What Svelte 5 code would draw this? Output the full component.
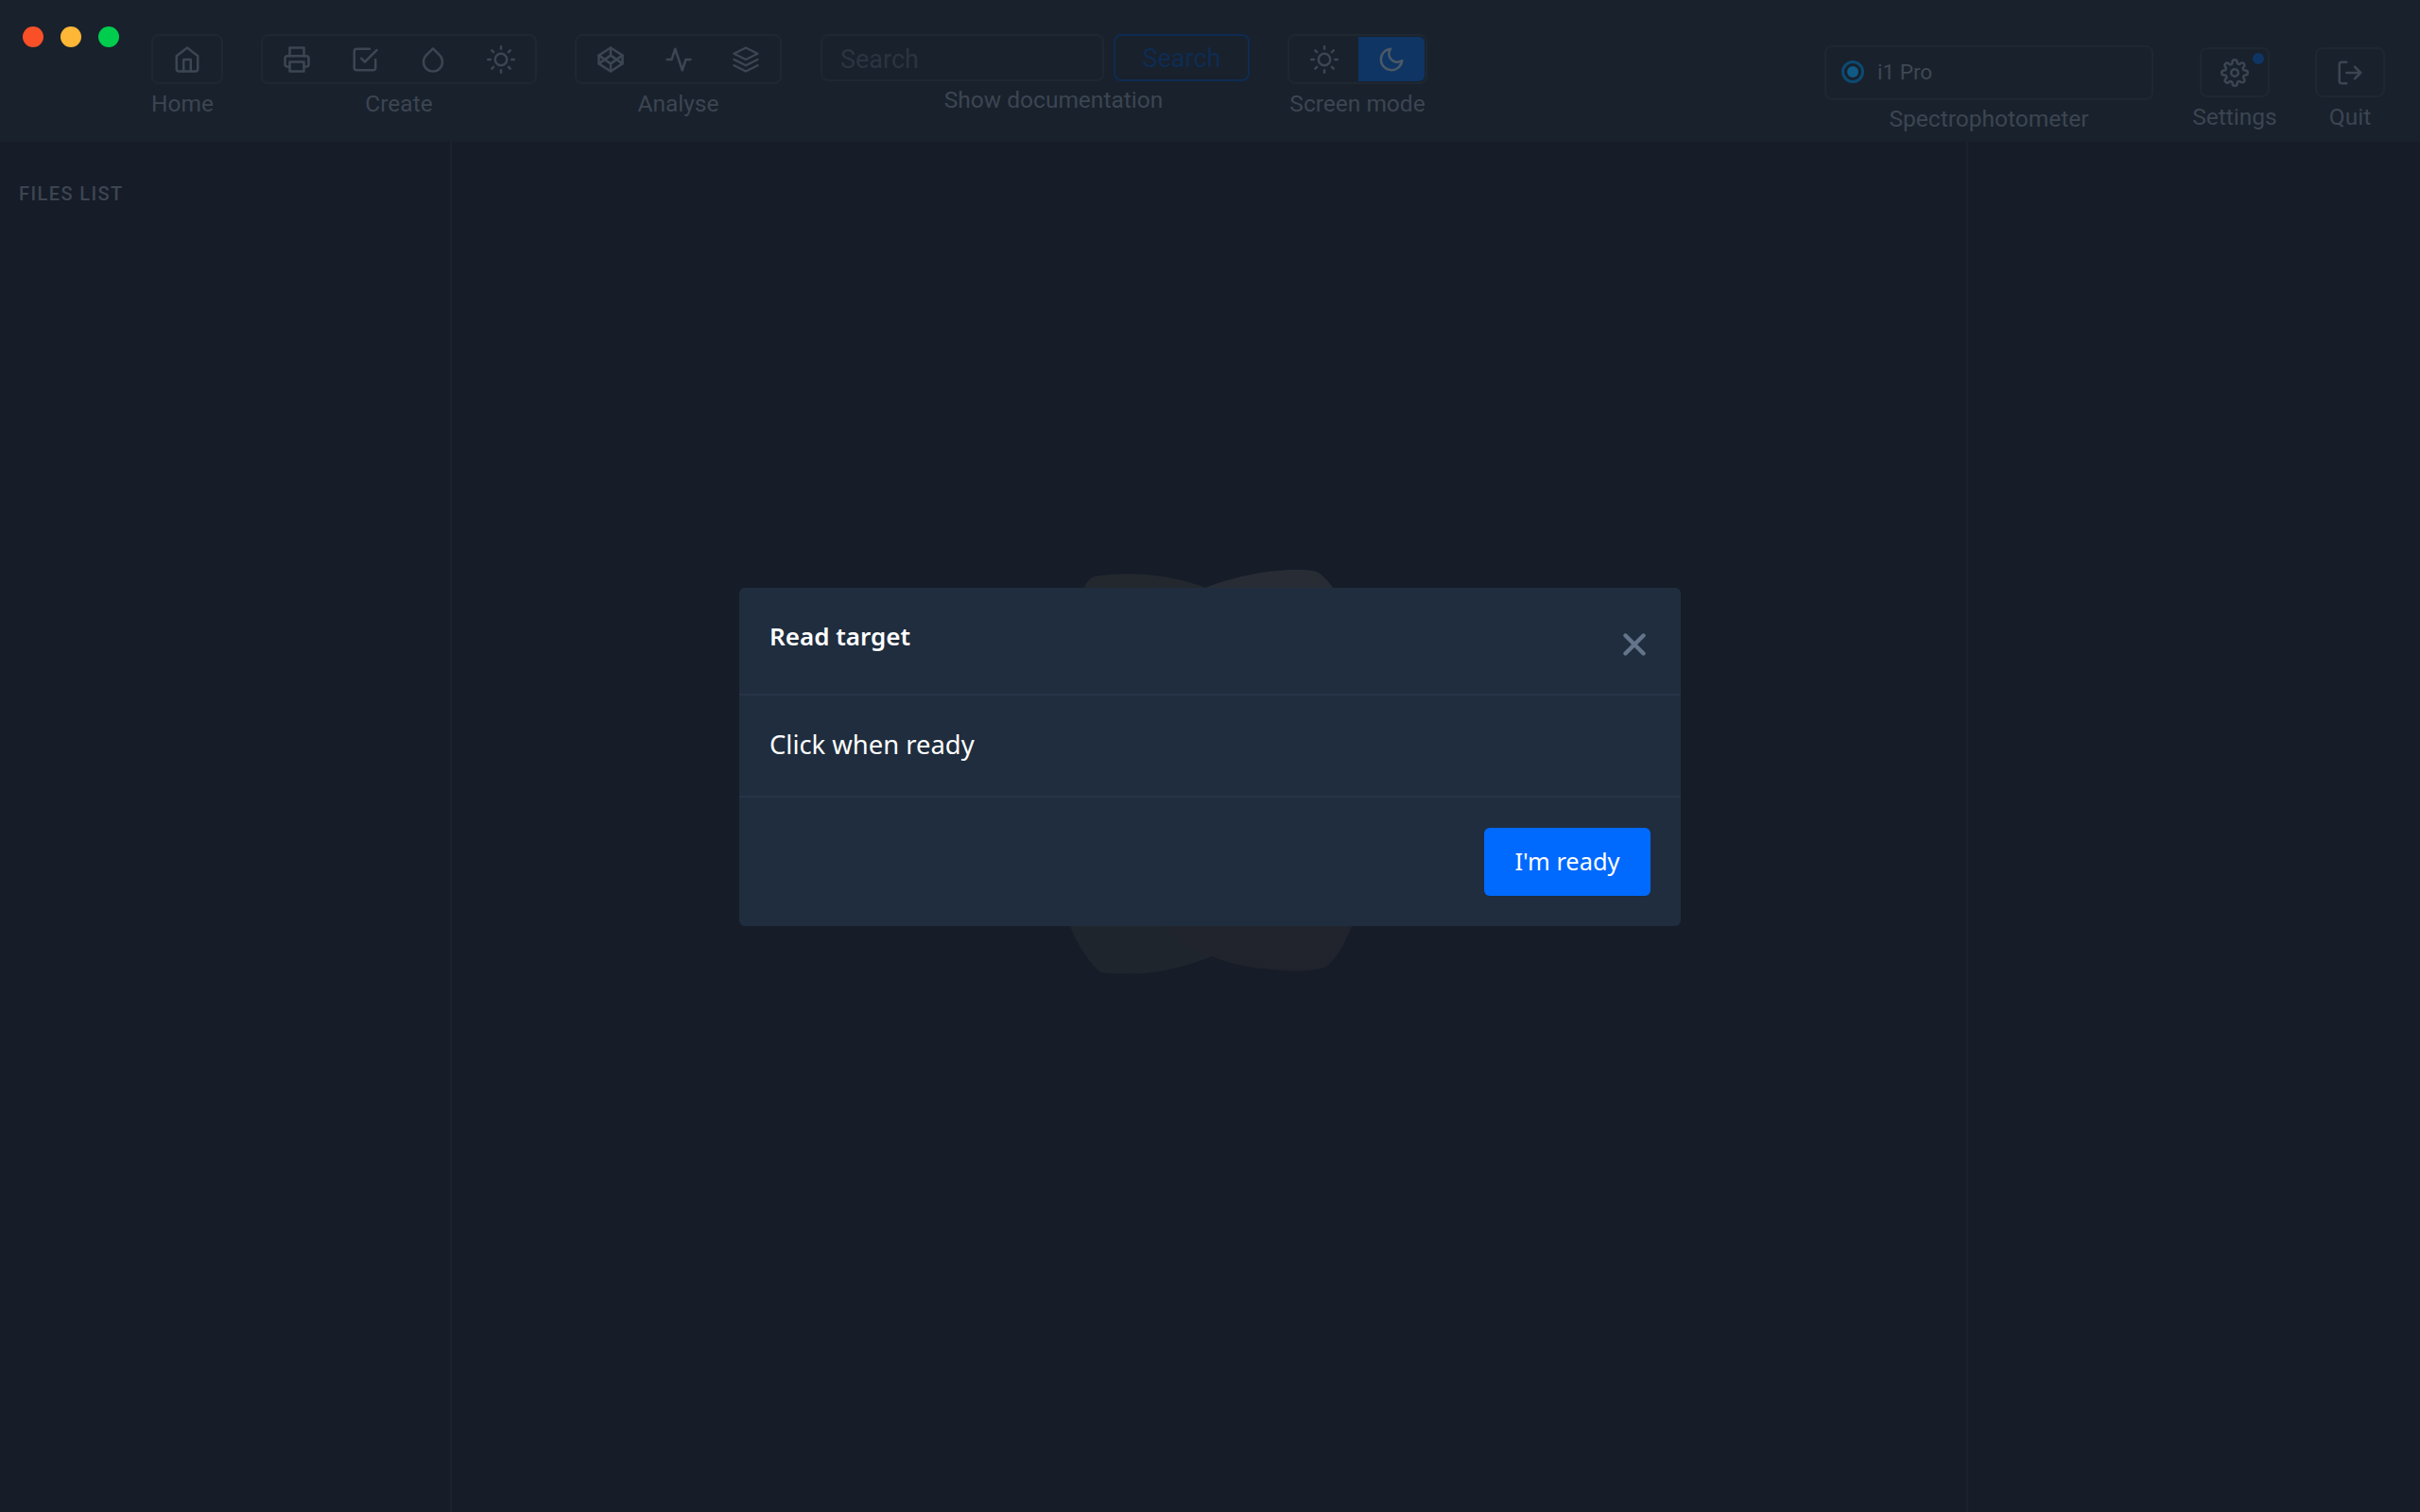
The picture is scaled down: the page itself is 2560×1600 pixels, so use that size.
<script>
  const createIcons = ['printer', 'check', 'droplet', 'sun'];
  const analyseIcons = ['codepen', 'activity', 'layers'];
</script>

{#snippet icon(name)}
  <svg class="icon" viewBox="0 0 24 24" fill="none" stroke="currentColor" stroke-width="2" stroke-linecap="round" stroke-linejoin="round">
    {#if name === 'home'}
      <path d="M3 9l9-7 9 7v11a2 2 0 0 1-2 2H5a2 2 0 0 1-2-2z" /><path d="M9 22V12h6v10" />
    {:else if name === 'printer'}
      <path d="M6 9V2h12v7" /><path d="M6 18H4a2 2 0 0 1-2-2v-5a2 2 0 0 1 2-2h16a2 2 0 0 1 2 2v5a2 2 0 0 1-2 2h-2" /><path d="M6 14h12v8H6z" />
    {:else if name === 'check'}
      <path d="M9 11l3 3L22 4" /><path d="M21 12v7a2 2 0 0 1-2 2H5a2 2 0 0 1-2-2V5a2 2 0 0 1 2-2h11" />
    {:else if name === 'droplet'}
      <path d="M12 2.69l5.66 5.66a8 8 0 1 1-11.31 0z" />
    {:else if name === 'sun'}
      <circle cx="12" cy="12" r="5" /><path d="M12 1v2M12 21v2M4.22 4.22l1.42 1.42M18.36 18.36l1.42 1.42M1 12h2M21 12h2M4.22 19.78l1.42-1.42M18.36 5.64l1.42-1.42" />
    {:else if name === 'codepen'}
      <path d="M12 2l10 6.5v7L12 22 2 15.5v-7z" /><path d="M12 22v-6.5M22 8.5l-10 7-10-7M2 15.5l10-7 10 7M12 2v6.5" />
    {:else if name === 'activity'}
      <path d="M22 12h-4l-3 9L9 3l-3 9H2" />
    {:else if name === 'layers'}
      <path d="M12 2L2 7l10 5 10-5z" /><path d="M2 17l10 5 10-5M2 12l10 5 10-5" />
    {:else if name === 'moon'}
      <path d="M21 12.79A9 9 0 1 1 11.21 3 7 7 0 0 0 21 12.79z" />
    {:else if name === 'settings'}
      <circle cx="12" cy="12" r="3" /><path d="M19.4 15a1.65 1.65 0 0 0 .33 1.82l.06.06a2 2 0 1 1-2.83 2.83l-.06-.06a1.65 1.65 0 0 0-2.82 1.17V21a2 2 0 1 1-4 0v-.09a1.65 1.65 0 0 0-2.82-1.12l-.06.06a2 2 0 1 1-2.83-2.83l.06-.06A1.65 1.65 0 0 0 3.09 14H3a2 2 0 1 1 0-4h.09a1.65 1.65 0 0 0 1.12-2.82l-.06-.06a2 2 0 1 1 2.83-2.83l.06.06A1.65 1.65 0 0 0 10 3.09V3a2 2 0 1 1 4 0v.09a1.65 1.65 0 0 0 2.82 1.12l.06-.06a2 2 0 1 1 2.83 2.83l-.06.06A1.65 1.65 0 0 0 20.91 10H21a2 2 0 1 1 0 4h-.09a1.65 1.65 0 0 0-1.51 1z" />
    {:else if name === 'logout'}
      <path d="M9 21H5a2 2 0 0 1-2-2V5a2 2 0 0 1 2-2h4" /><path d="M16 17l5-5-5-5M21 12H9" />
    {/if}
  </svg>
{/snippet}

<div class="app">
  <header class="topbar">
    <div class="lights">
      <span class="light red"></span><span class="light yellow"></span><span class="light green"></span>
    </div>
    <div class="group home">
      <div class="box single">{@render icon('home')}</div>
      <span class="label left">Home</span>
    </div>
    <div class="group create">
      <div class="box multi">
        {#each createIcons as n}<span class="cell">{@render icon(n)}</span>{/each}
      </div>
      <span class="label">Create</span>
    </div>
    <div class="group analyse">
      <div class="box multi">
        {#each analyseIcons as n}<span class="cell">{@render icon(n)}</span>{/each}
      </div>
      <span class="label">Analyse</span>
    </div>
    <div class="group docs">
      <div class="search-row">
        <div class="search-input">Search</div>
        <div class="search-btn">Search</div>
      </div>
      <span class="label">Show documentation</span>
    </div>
    <div class="group mode">
      <div class="box toggle">
        <span class="cell">{@render icon('sun')}</span>
        <span class="cell on">{@render icon('moon')}</span>
      </div>
      <span class="label">Screen mode</span>
    </div>
    <div class="group spectro">
      <div class="device">
        <span class="radio"></span>
        <span>i1 Pro</span>
      </div>
      <span class="label">Spectrophotometer</span>
    </div>
    <div class="group settings">
      <div class="box single">
        {@render icon('settings')}
        <span class="badge"></span>
      </div>
      <span class="label">Settings</span>
    </div>
    <div class="group quit">
      <div class="box single">{@render icon('logout')}</div>
      <span class="label">Quit</span>
    </div>
  </header>

  <main class="body">
    <aside class="files"><h2>FILES LIST</h2></aside>
    <section class="center">
      <svg class="mark" viewBox="0 0 330 440" aria-hidden="true">
        <defs>
          <linearGradient id="lobeLeft" x1="0" y1="0" x2="0" y2="1">
            <stop offset="0" stop-color="#23282f" /><stop offset="1" stop-color="#1f252d" />
          </linearGradient>
          <linearGradient id="lobeRight" x1="0" y1="0" x2="0" y2="1">
            <stop offset="0" stop-color="#282d35" /><stop offset="1" stop-color="#20232b" />
          </linearGradient>
        </defs>
        <path fill="url(#lobeLeft)" d="M38 10C80 3 125 10 155 22L162 412C130 425 95 432 70 430C55 430 45 430 43 428C30 415 20 400 12 380C0 300 5 60 27 22C30 15 33 12 38 10Z" />
        <path fill="url(#lobeRight)" d="M155 22C190 8 230 2 255 3C265 3 272 4 276 7C282 12 286 16 290 22C320 150 325 300 310 380C302 400 293 415 283 423C270 428 255 428 240 427C210 425 185 422 162 412C145 405 125 392 110 380C60 300 100 60 155 22Z" />
      </svg>
    </section>
    <aside class="rightside"></aside>
  </main>

  <div class="modal" role="dialog">
    <div class="modal-head">
      <h3>Read target</h3>
      <svg class="close" viewBox="0 0 24 24" fill="none" stroke="currentColor" stroke-width="4.4" stroke-linecap="round"><path d="M2.5 2.5l19 19M21.5 2.5l-19 19" /></svg>
    </div>
    <div class="modal-body">Click when ready</div>
    <div class="modal-foot"><button>I'm ready</button></div>
  </div>
</div>

<style>
  :global(body) { margin: 0; background: #161c28; }
  .app { position: relative; width: 2560px; height: 1600px; overflow: hidden; background: #161c28; font-family: Roboto, sans-serif; }

  .topbar { position: relative; height: 150px; background: #19212c; color: #3b434f; }
  .lights { position: absolute; left: 24px; top: 28px; display: flex; gap: 18px; }
  .light { width: 22px; height: 22px; border-radius: 50%; }
  .red { background: #f95027; }
  .yellow { background: #feb736; }
  .green { background: #00cc4e; }

  .group { position: absolute; top: 36px; display: flex; flex-direction: column; align-items: center; }
  .label { font-size: 24.5px; line-height: 28px; margin-top: 7px; color: #3c4552; white-space: nowrap; }
  .box { box-sizing: border-box; height: 53px; border: 2px solid #1f2731; border-radius: 8px; display: flex; align-items: center; }
  .single { justify-content: center; }
  .icon { width: 30px; height: 30px; color: #3c4552; }

  .home { left: 160px; width: 76px; }
  .home .box { width: 76px; }
  .label.left { align-self: flex-start; }
  .create { left: 276px; width: 292px; }
  .create .box { width: 292px; }
  .analyse { left: 608px; width: 219px; }
  .analyse .box { width: 219px; }
  .cell { display: flex; align-items: center; justify-content: center; width: 72px; height: 100%; }

  .docs { left: 868px; width: 454px; }
  .search-row { display: flex; width: 454px; justify-content: space-between; }
  .search-input { box-sizing: border-box; width: 300px; height: 50px; border: 2px solid #1f2731; border-radius: 8px; padding-left: 19px; line-height: 50px; font-size: 27px; color: #2b3440; }
  .search-btn { box-sizing: border-box; width: 144px; height: 50px; border: 2px solid #0e2c52; border-radius: 8px; text-align: center; line-height: 48px; font-size: 27px; color: #0e2c52; }
  .docs .label { margin: 6px 0 0 39px; }

  .mode { left: 1362px; width: 148px; }
  .mode .box { width: 148px; padding: 1px; }
  .mode .on { flex: 1; background: #0e3563; border-radius: 0 6px 6px 0; }
  .on .icon { color: #4c5866; }

  .spectro { left: 1930px; top: 48px; width: 348px; }
  .device { box-sizing: border-box; width: 348px; height: 58px; border: 2px solid #1f2731; border-radius: 8px; display: flex; align-items: center; padding: 0 0 2px 16px; gap: 14px; font-size: 22.5px; color: #3f4854; }
  .radio { box-sizing: border-box; width: 24px; height: 24px; border-radius: 50%; border: 3px solid #0c4a71; background: #105a86; background-clip: content-box; padding: 3px; }
  .spectro .label { margin-top: 6px; }

  .settings { left: 2327px; top: 50px; width: 74px; }
  .quit { left: 2449px; top: 50px; width: 74px; }
  .settings .box, .quit .box { width: 74px; position: relative; }
  .badge { position: absolute; top: 4px; right: 4px; width: 12px; height: 12px; border-radius: 50%; background: #0e3563; }

  .body { display: flex; height: 1450px; }
  .files { box-sizing: border-box; width: 478px; border-right: 2px solid #1b222d; padding: 43px 20px; }
  .files h2 { margin: 0; font-size: 20px; line-height: 24px; font-weight: 500; letter-spacing: 1.4px; color: #3c4552; }
  .center { flex: 1; position: relative; }
  .rightside { box-sizing: border-box; width: 480px; border-left: 2px solid #1b222d; }
  .mark { position: absolute; left: 642px; top: 450px; width: 330px; height: 440px; }

  .modal { position: absolute; left: 782px; top: 622px; width: 996px; height: 358px; background: #1f2d3e; border-radius: 6px; color: #fff; font-family: "Noto Sans", sans-serif; display: flex; flex-direction: column; }
  .modal-head { position: relative; box-sizing: border-box; height: 114px; border-bottom: 2px solid #283348; padding: 32px; }
  h3 { margin: 0; font-size: 26px; line-height: 38px; font-weight: 600; }
  .close { position: absolute; right: 37px; top: 47px; width: 24px; height: 26px; color: #64748b; }
  .modal-body { box-sizing: border-box; height: 108px; border-bottom: 2px solid #283348; padding: 31px 32px; font-size: 27.4px; line-height: 42px; }
  .modal-foot { flex: 1; display: flex; justify-content: flex-end; padding: 32px; }
  button { width: 176px; height: 72px; padding: 0 0 3px; background: #0069fe; border: 0; border-radius: 6px; color: #fff; font: 400 25.4px "Noto Sans", sans-serif; }
</style>
